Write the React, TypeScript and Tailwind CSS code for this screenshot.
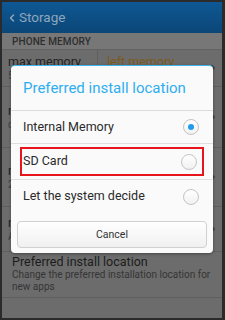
import { ChevronLeft, ChevronRight } from 'lucide-react';

const font = { fontFamily: 'Roboto, "Noto Sans", sans-serif' };

function Radio({ checked }: { checked?: boolean }) {
  return (
    <div className="w-[16px] h-[16px] rounded-full border border-[#c4c4c4] bg-gradient-to-b from-white to-[#f1f1f1] flex items-center justify-center shrink-0">
      {checked && <div className="w-[6px] h-[6px] rounded-full bg-[#1f9bf0]" />}
    </div>
  );
}

function BackRow({
  title,
  sub,
  className,
}: {
  title: string;
  sub: string;
  className: string;
}) {
  return (
    <div className={`flex items-center justify-between pl-[6px] pr-[4px] border-b border-[#5f5f5f] ${className}`}>
      <div className="flex flex-col">
        <span className="text-[12.5px] leading-[14px] text-[#222]">{title}</span>
        <span className="text-[10px] leading-[13px] text-[#3c3c3c]">{sub}</span>
      </div>
      <ChevronRight size={10} strokeWidth={3} className="text-[#3a3a3a]" />
    </div>
  );
}

export default function App() {
  const options = [
    { label: 'Internal Memory', checked: true },
    { label: 'SD Card', highlight: true },
    { label: 'Let the system decide' },
  ];

  return (
    <div className="w-[225px] h-[320px] bg-[#2b2b2b] pt-[2px] pl-[2px] pr-[3px] pb-[2px]" style={font}>
      <div className="relative w-full h-full bg-[#6c6c6c] overflow-hidden flex flex-col">
        {/* action bar */}
        <div className="h-[31px] shrink-0 bg-gradient-to-b from-[#0f5894] to-[#0b4677] flex items-center pl-[4px] gap-[1px]">
          <ChevronLeft size={12} strokeWidth={3} className="text-[#8ea6bb]" />
          <span className="text-[13.5px] text-[#8ea6bb]">Storage</span>
        </div>

        {/* section header */}
        <div className="h-[17px] shrink-0 bg-[#777] border-b border-[#626262] flex items-center pl-[10px]">
          <span className="text-[10px] font-medium tracking-[0.1px] text-[#2e2e2e]">PHONE MEMORY</span>
        </div>

        {/* memory row */}
        <div className="h-[37px] shrink-0 flex items-center border-b border-[#5f5f5f] pr-[4px]">
          <div className="w-[96px] h-full flex flex-col justify-center pl-[6px] border-r border-[#5f5f5f]">
            <span className="text-[12.5px] leading-[14px] text-[#222]">max memory</span>
            <span className="text-[10px] leading-[13px] text-[#3c3c3c]">5.47 GB</span>
          </div>
          <div className="flex-1 h-full flex flex-col justify-center pl-[9px]">
            <span className="text-[12.5px] leading-[14px] text-[#7a5a1c]">left memory</span>
            <span className="text-[10px] leading-[13px] text-[#3c3c3c]">3.12 GB</span>
          </div>
          <ChevronRight size={10} strokeWidth={3} className="text-[#3a3a3a]" />
        </div>

        <BackRow title="mount point" sub="computer storage" className="h-[61px] shrink-0" />
        <BackRow title="memory used" sub="2.35 GB" className="h-[59px] shrink-0" />
        <BackRow title="media" sub="Apps" className="h-[45px] shrink-0" />

        {/* preferred install location row */}
        <div className="h-[46px] shrink-0 flex flex-col justify-end pb-[4px] pl-[10px] pr-[8px] border-b border-[#5f5f5f]">
          <span className="text-[12.5px] leading-[14px] text-[#1c1c1c]">Preferred install location</span>
          <span className="text-[10px] leading-[12px] text-[#353535]">
            Change the preferred installation location for new apps
          </span>
        </div>

        {/* dialog */}
        <div className="absolute left-[9px] top-[63px] w-[202px] h-[188px] bg-[#fafafa] rounded-[4px] border-t border-[#3fb4ef] shadow-[0_1px_3px_rgba(0,0,0,0.35)] flex flex-col">
          <div className="h-[45px] shrink-0 flex items-center pl-[12px] border-b border-[#dcdcdc]">
            <span className="text-[15px] text-[#2eaef0]">Preferred install location</span>
          </div>
          {options.map((o, i) => (
            <div
              key={o.label}
              className={`shrink-0 flex items-center ${i === 1 ? 'h-[36px] px-[9px]' : 'h-[33px] px-[3px]'} ${i < 2 ? 'border-b border-[#e0e0e0]' : ''}`}
            >
              <div
                className={`flex-1 flex items-center justify-between ${
                  o.highlight ? 'h-[29px] border-2 border-[#e8141b] pl-[1px] pr-[5px]' : 'pl-[9px] pr-[11px]'
                }`}
              >
                <span className="text-[12.5px] text-[#2a2a2a]">{o.label}</span>
                <Radio checked={o.checked} />
              </div>
            </div>
          ))}
          <div className="flex-1 px-[6px] pt-[8px] pb-[4px]">
            <button className="w-full h-[27px] rounded-[4px] border border-[#d0d0d0] bg-gradient-to-b from-white to-[#f0f0f0] text-[10.5px] text-[#333]">
              Cancel
            </button>
          </div>
        </div>
      </div>
    </div>
  );
}
